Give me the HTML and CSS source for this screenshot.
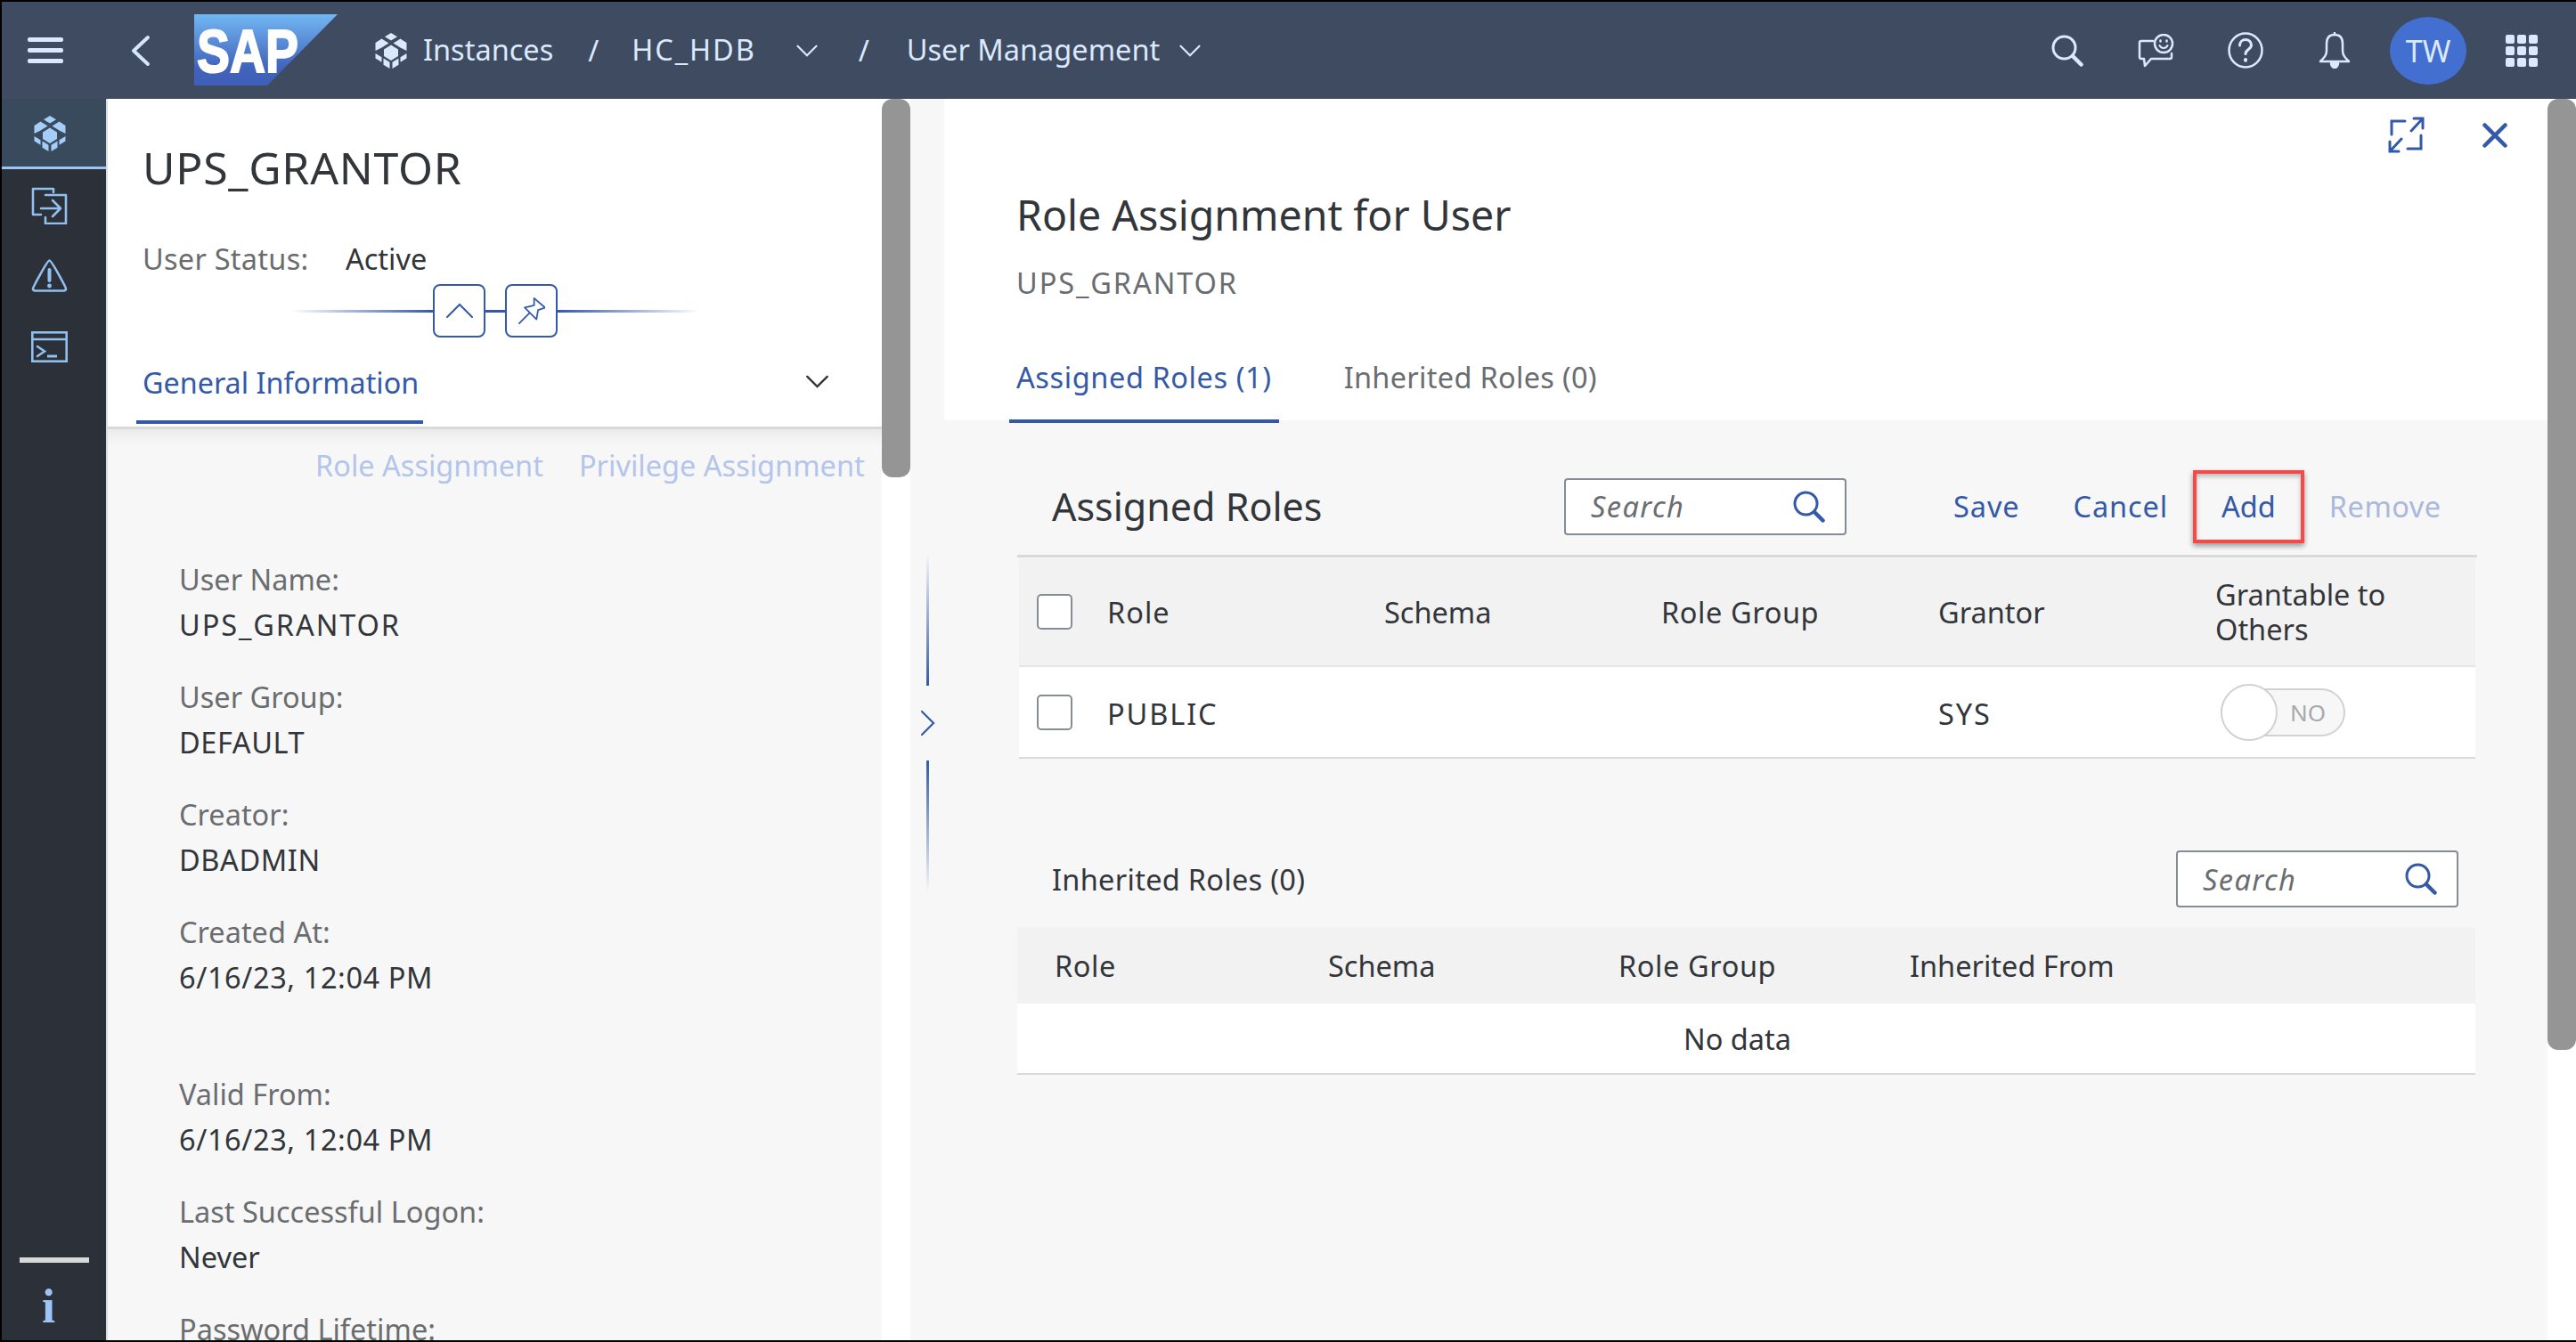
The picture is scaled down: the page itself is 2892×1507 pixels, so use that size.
FILE: index.html
```html
<!DOCTYPE html>
<html lang="en">
<head>
<meta charset="utf-8">
<title>User Management</title>
<link rel="stylesheet" href="styles.css">
</head>
<body>
<svg class="defs" width="0" height="0" aria-hidden="true">
  <defs>
    <linearGradient id="sapfill" x1="0" y1="0" x2="0" y2="1"><stop offset="0" stop-color="#72b7f3"/><stop offset="0.75" stop-color="#4163bc"/><stop offset="1" stop-color="#3f5fb8"/></linearGradient>
    <symbol id="cube" viewBox="0 0 36 40">
      <path d="M18 0l7 4.200-7 4.300-7-4.300z"/>
      <path d="M7.500 6.500L15.500 11.500 7.500 16.500 0.500 20V11z"/>
      <path d="M28.500 6.500L20.500 11.500 28.500 16.500 35.500 20V11z"/>
      <path d="M18 13.500l8 5v7.500l-8 5-8-5v-7.500z"/>
      <path d="M0.500 23l7 4.200v5.500L0.500 28.500z"/>
      <path d="M35.500 23l-7 4.200v5.500l7-4.200z"/>
      <path d="M9.500 28.500l7 4.300V40l-7-4.300z"/>
      <path d="M26.500 28.500l-7 4.300V40l7-4.300z"/>
    </symbol>
    <symbol id="glass" viewBox="0 0 36 36">
      <circle cx="14.500" cy="14.500" r="12.500" fill="none" stroke="currentColor" stroke-width="3"/>
      <path d="M24 24l9.500 9.500" fill="none" stroke="currentColor" stroke-width="4.500" stroke-linecap="round"/>
    </symbol>
    <symbol id="chev-down" viewBox="0 0 28 16">
      <path d="M2 2l12 12L26 2" fill="none" stroke="currentColor" stroke-width="2.500" stroke-linecap="round"/>
    </symbol>
  </defs>
</svg>

<div class="app">
  <header class="shell">
    <button class="shell-btn burger" type="button" aria-label="Menu"><span></span><span></span><span></span></button>
    <svg class="back" viewBox="0 0 22 36"><path d="M19 3L3 18l16 15" fill="none" stroke="currentColor" stroke-width="4" stroke-linecap="round" stroke-linejoin="round"/></svg>
    <svg class="logo" viewBox="0 0 161 80">
      <polygon points="0,0 161,0 82,80 0,80" fill="url(#sapfill)"/>
      <text class="logo-text" x="3" y="65" textLength="114" lengthAdjust="spacingAndGlyphs">SAP</text>
    </svg>
    <nav class="crumbs">
      <svg class="crumb-ico"><use href="#cube"/></svg>
      <span class="crumb c-inst">Instances</span>
      <span class="slash s1">/</span>
      <span class="crumb c-hc ls-caps">HC_HDB</span>
      <svg class="crumb-chev c1"><use href="#chev-down"/></svg>
      <span class="slash s2">/</span>
      <span class="crumb c-um">User Management</span>
      <svg class="crumb-chev c2"><use href="#chev-down"/></svg>
    </nav>
    <div class="shell-actions">
      <svg class="act a-search"><use href="#glass"/></svg>
      <svg class="act a-chat" viewBox="0 0 41 38" fill="none" stroke="currentColor" stroke-width="2.500" stroke-linecap="round" stroke-linejoin="round">
        <path d="M17 8H4a2 2 0 0 0-2 2v16a2 2 0 0 0 2 2h3l1 8 7-8h21a2 2 0 0 0 2-2v-4"/>
        <circle cx="29" cy="11" r="10"/>
        <path d="M24.500 13c2 4 7 4 9 0" stroke-width="2"/>
        <path d="M25.500 7.500v1M32.500 7.500v1" stroke-width="2.500"/>
      </svg>
      <svg class="act a-help" viewBox="0 0 40 41" fill="none" stroke="currentColor" stroke-width="2.500" stroke-linecap="round">
        <ellipse cx="20" cy="20.500" rx="18.500" ry="19"/>
        <path d="M13.500 15c0-4 3-6.500 6.500-6.500s6.500 2.500 6.500 6c0 5-6.500 5-6.500 10" stroke-width="3"/>
        <path d="M20 31v.8" stroke-width="4"/>
      </svg>
      <svg class="act a-bell" viewBox="0 0 36 41" fill="none" stroke="currentColor" stroke-width="2.500" stroke-linejoin="round">
        <path d="M18 3c-6 0-9 4-9 10v8c0 5-3 8-7 12h32c-4-4-7-7-7-12v-8c0-6-3-10-9-10z"/>
        <path d="M18 1v2" stroke-linecap="round"/>
        <path d="M14 35a4 5 0 0 0 8 0z" fill="currentColor"/>
      </svg>
      <div class="avatar">TW</div>
      <div class="apps"><i></i><i></i><i></i><i></i><i></i><i></i><i></i><i></i><i></i></div>
    </div>
  </header>

  <div class="body">
    <nav class="rail">
      <div class="rail-item active"><svg class="rail-cube"><use href="#cube"/></svg></div>
      <div class="rail-list">
        <svg class="rail-ico r-move" viewBox="0 0 41 42" fill="none" stroke="currentColor" stroke-width="2.600" stroke-linejoin="round" stroke-linecap="round">
          <path d="M25 6V2H2v29h9"/>
          <path d="M16 9h23v32H16v-7"/>
          <path d="M11 24h21M24 15l9 9-9 9" />
        </svg>
        <svg class="rail-ico r-warn" viewBox="0 0 41 38" fill="none" stroke="currentColor" stroke-width="2.600" stroke-linejoin="round">
          <path d="M20.500 2.500C18 2.500 2 33 2 34c0 1.500 1 2.500 2.500 2.500h32c1.500 0 2.500-1 2.500-2.500 0-1-16-31.500-18.500-31.500z"/>
          <path d="M20.500 13v12" stroke-width="4" stroke-linecap="round"/>
          <circle cx="20.500" cy="31" r="2.400" fill="currentColor" stroke="none"/>
        </svg>
        <svg class="rail-ico r-term" viewBox="0 0 41 35" fill="none" stroke="currentColor" stroke-width="2.600">
          <rect x="1.300" y="1.300" width="38.400" height="32.400"/>
          <path d="M1.300 9h38.400"/>
          <path d="M7 17l8 5.500L7 28" stroke-linecap="round"/>
          <path d="M18 28h11" stroke-width="3"/>
        </svg>
      </div>
      <div class="rail-foot">
        <span class="rail-rule"></span>
        <span class="rail-i">i</span>
      </div>
    </nav>

    <section class="detail">
      <div class="detail-head">
        <h1 class="detail-title">UPS_GRANTOR</h1>
        <div class="status"><span class="status-label">User Status:</span><span class="status-val">Active</span></div>
        <div class="collapse">
          <span class="rule rule-l"></span>
          <button class="mini" type="button" aria-label="Collapse"><svg viewBox="0 0 30 16"><path d="M1 15L15 1l14 14" fill="none" stroke="currentColor" stroke-width="2"  stroke-linecap="round"/></svg></button>
          <span class="rule rule-m"></span>
          <button class="mini" type="button" aria-label="Pin"><svg viewBox="0 0 34 34" fill="none" stroke="currentColor" stroke-width="2" stroke-linejoin="round" stroke-linecap="round"><path d="M1 33l13-13"/><path d="M20 1l14 12-9 3-2 12-15-15 12-3z"/></svg></button>
          <span class="rule rule-r"></span>
        </div>
        <div class="tabs-row">
          <span class="tab-gi">General Information</span>
          <svg class="gi-chev"><use href="#chev-down"/></svg>
        </div>
      </div>
      <div class="detail-body">
        <div class="links"><span>Role Assignment</span><span>Privilege Assignment</span></div>
        <dl class="facts">
          <dt>User Name:</dt><dd class="ls-caps">UPS_GRANTOR</dd>
          <dt>User Group:</dt><dd class="ls-s">DEFAULT</dd>
          <dt>Creator:</dt><dd class="ls-s">DBADMIN</dd>
          <dt>Created At:</dt><dd class="gap-after ls-s">6/16/23, 12:04 PM</dd>
          <dt>Valid From:</dt><dd class="ls-s">6/16/23, 12:04 PM</dd>
          <dt>Last Successful Logon:</dt><dd>Never</dd>
          <dt>Password Lifetime:</dt>
        </dl>
      </div>
    </section>
    <div class="track track-l"><div class="thumb thumb-l"></div></div>

    <div class="splitter">
      <span class="split-line up"></span>
      <svg class="split-chev" viewBox="0 0 17 30"><path d="M2 2l13 13L2 28" fill="none" stroke="currentColor" stroke-width="2.200" stroke-linecap="round"/></svg>
      <span class="split-line down"></span>
    </div>

    <section class="panel">
      <div class="panel-head">
        <div class="panel-tools">
          <svg class="tool-expand" viewBox="0 0 41 41" fill="none" stroke="currentColor" stroke-width="3" stroke-linecap="round"><path d="M19 5H4v15"/><path d="M22 36h15V21"/><path d="M26 16L39 2M29 2h10v11"/><path d="M15 25L2 39M12 39H2V28"/></svg>
          <svg class="tool-close" viewBox="0 0 28 28" fill="none" stroke="currentColor" stroke-width="4.500" stroke-linecap="round"><path d="M2.500 2.500l23 23M25.500 2.500l-23 23"/></svg>
        </div>
        <h2 class="panel-title">Role Assignment for User</h2>
        <div class="panel-sub ls-caps">UPS_GRANTOR</div>
        <div class="panel-tabs">
          <span class="ptab on ls-s">Assigned Roles (1)</span>
          <span class="ptab ls-t">Inherited Roles (0)</span>
        </div>
      </div>

      <div class="panel-body">
        <div class="toolbar">
          <h3 class="tb-title">Assigned Roles</h3>
          <div class="search tb-search"><span>Search</span><svg><use href="#glass"/></svg></div>
          <div class="tb-actions">
            <a class="act-link l-save">Save</a>
            <a class="act-link l-cancel">Cancel</a>
            <a class="act-link l-add">Add</a>
            <a class="act-link l-remove">Remove</a>
          </div>
        </div>

        <div class="grid assigned">
          <div class="g-head">
            <span class="check"></span>
            <span class="gc ls-1">Role</span>
            <span class="gc">Schema</span>
            <span class="gc ls-s">Role Group</span>
            <span class="gc">Grantor</span>
            <span class="gc grantable">Grantable to Others</span>
          </div>
          <div class="g-row">
            <span class="check"></span>
            <span class="gc txt ls-caps">PUBLIC</span>
            <span class="gc"></span>
            <span class="gc"></span>
            <span class="gc txt ls-caps">SYS</span>
            <span class="gc"><span class="switch"><span class="knob"></span><span class="sw-text">NO</span></span></span>
          </div>
        </div>

        <div class="sub-bar">
          <span class="sub-title ls-t">Inherited Roles (0)</span>
          <div class="search"><span>Search</span><svg><use href="#glass"/></svg></div>
        </div>

        <div class="grid inherited">
          <div class="i-head">
            <span class="ls-s">Role</span><span>Schema</span><span class="ls-s">Role Group</span><span>Inherited From</span>
          </div>
          <div class="i-row">No data</div>
        </div>
      </div>
    </section>
    <div class="track track-r"><div class="thumb thumb-r"></div></div>
  </div>
</div>
</body>
</html>
```
FILE: styles.css
```css
* { box-sizing: border-box; }
html, body { margin: 0; padding: 0; height: 100%; overflow: hidden; background: #000; }
body { font-family: "Noto Sans", "Liberation Sans", sans-serif; font-size: 32.5px; color: #32363a; }
.defs { position: absolute; }
h1, h2, h3, dl, dd { margin: 0; font-weight: 400; }
button { padding: 0; background: none; border: 0; font: inherit; color: inherit; }
.ls-caps { letter-spacing: 1.9px; }
.ls-s { letter-spacing: .6px; }
.ls-t { letter-spacing: .3px; }
.ls-1 { letter-spacing: 1px; }

.app { display: flex; flex-direction: column; width: 2892px; height: 1507px; padding: 2px 0 2px 2px; overflow: hidden; }

/* shell */
.shell { flex: 0 0 109px; display: flex; align-items: center; background: #3f4b60; color: #dbe9fd; line-height: 44px; }
.burger { width: 40px; height: 29px; margin-left: 29px; display: flex; flex-direction: column; justify-content: space-between; }
.burger span { display: block; height: 5px; border-radius: 2px; background: #dbe9fd; }
.back { width: 22px; height: 36px; margin-left: 76px; color: #d5e6fb; }
.logo { width: 161px; height: 80px; margin-left: 49px; margin-top: -2px; }
.logo-text { font-family: "Liberation Sans", sans-serif; font-weight: 700; font-size: 69px; fill: #fff; stroke: #fff; stroke-width: 2px; }
.crumbs { display: flex; align-items: center; margin-left: 42px; }
.crumb-ico { width: 36px; height: 40px; fill: #dbe9fd; }
.crumb { white-space: nowrap; position: relative; top: -1px; }
.c-inst { margin-left: 18px; }
.s1 { margin-left: 39px; }
.c-hc { margin-left: 37px; }
.crumb-chev { width: 26px; height: 14px; }
.c1 { margin-left: 44px; }
.s2 { margin-left: 45px; }
.c-um { margin-left: 42px; }
.c2 { margin-left: 21px; }
.shell-actions { margin-left: auto; display: flex; align-items: center; padding-right: 43px; }
.act { display: block; }
.a-search { width: 36px; height: 36px; margin-right: 61px; }
.a-chat { width: 41px; height: 38px; margin-right: 60px; }
.a-help { width: 40px; height: 41px; margin-right: 62px; }
.a-bell { width: 36px; height: 41px; margin-right: 44px; }
.avatar { width: 86px; height: 76px; border-radius: 50%; background: #436fd0; display: flex; align-items: center; justify-content: center; margin-right: 44px; color: #dbe9fd; font-size: 34px; }
.apps { display: grid; grid-template-columns: repeat(3, 10px); grid-auto-rows: 10px; gap: 3px; }
.apps i { border-radius: 2px; background: #dbe9fd; }

/* body */
.body { flex: 1; min-height: 0; display: flex; background: #f7f7f7; }
.rail { flex: 0 0 117px; display: flex; flex-direction: column; background: #2c3039; color: #91bfee; }
.rail-item.active { height: 79px; display: flex; justify-content: center; padding: 19px 10px 0 0; background: #3a4a5d; border-bottom: 3px solid #9cc4f5; }
.rail-cube { width: 36px; height: 40px; fill: #a5cdfa; }
.rail-list { display: flex; flex-direction: column; align-items: center; gap: 38px; padding: 20px 10px 0 0; }
.rail-ico { display: block; width: 41px; flex: none; }
.r-move { height: 42px; }
.r-warn { height: 38px; }
.r-term { height: 35px; margin-top: 6px; }
.rail-foot { margin-top: auto; display: flex; flex-direction: column; align-items: center; }
.rail-rule { width: 78px; height: 6px; margin-bottom: 11px; background: #d9d9d9; }
.rail-i { font-family: "Liberation Serif", serif; font-size: 54px; line-height: 76px; color: #9cc4f5; font-weight: 700; margin-left: -12px; }

/* left */
.detail { flex: 0 0 871px; display: flex; flex-direction: column; overflow: hidden; border-left: 2px solid #dcdcdc; }
.detail-head { height: 371px; background: #fff; border-bottom: 3px solid #d9d9d9; padding-left: 39px; position: relative; }
.detail-title { font-size: 50px; letter-spacing: .7px; line-height: 60px; padding-top: 47px; height: 107px; }
.status { margin-top: 51px; line-height: 44px; height: 44px; display: flex; }
.status-label { width: 228px; color: #6a6d70; letter-spacing: .25px; }
.status-val { color: #32363a; }
.collapse { display: flex; align-items: center; height: 60px; margin-top: 6px; margin-left: -39px; padding-left: 205px; color: #3359a8; }
.rule { display: block; height: 3px; }
.rule-l { width: 160px; background: linear-gradient(90deg, rgba(51,89,168,0), #3359a8); }
.rule-m { width: 22px; background: #3359a8; }
.rule-r { width: 160px; background: linear-gradient(90deg, #3359a8, rgba(51,89,168,0)); }
.mini { width: 59px; height: 60px; border: 2px solid #3359a8; border-radius: 8px; display: flex; align-items: center; justify-content: center; background: #fff; }
.mini svg { width: 30px; height: 30px; }
.tabs-row { margin-left: -7px; width: 322px; height: 97px; padding: 28px 0 0 7px; line-height: 44px; color: #3359a8; border-bottom: 4px solid #3359a8; white-space: nowrap; position: relative; }
.tab-gi { font-size: 32.3px; }
.gi-chev { position: absolute; left: 751px; top: 42px; width: 27px; height: 15px; color: #32363a; }
.detail-body { flex: 1; background: linear-gradient(#ebebeb, #f7f7f7 18px); overflow: hidden; padding-left: 80px; }
.links { display: flex; gap: 40px; padding-left: 153px; line-height: 44px; padding-top: 19px; color: #b3c5ea; white-space: nowrap; }
.facts { padding-top: 80px; }
.facts dt { color: #6a6d70; line-height: 51px; }
.facts dd { line-height: 51px; margin-bottom: 30px; }
.facts dd.gap-after { margin-bottom: 80px; }

/* scroll */
.track { flex: 0 0 32px; background: #fff; }
.thumb { width: 100%; background: #959595; }
.thumb-l { height: 425px; border-radius: 12px; }
.thumb-r { height: 1068px; border-radius: 12px; }

/* splitter */
.splitter { flex: 0 0 38px; display: flex; flex-direction: column; align-items: center; padding-top: 511px; color: #3359a8; }
.split-line { width: 3px; height: 148px; }
.split-line.up { background: linear-gradient(rgba(51,89,168,0), #3359a8); }
.split-line.down { background: linear-gradient(#3359a8, rgba(51,89,168,0)); }
.split-chev { width: 17px; height: 30px; margin: 27px 0; }

/* right */
.panel { flex: 1; min-width: 0; display: flex; flex-direction: column; }
.panel-head { height: 361px; background: #fff; padding-left: 81px; position: relative; }
.panel-tools { position: absolute; right: 45px; top: 20px; display: flex; align-items: center; gap: 65px; color: #3359a8; }
.tool-expand { width: 41px; height: 41px; }
.tool-close { width: 28px; height: 28px; }
.panel-title { font-size: 46.5px; line-height: 60px; padding-top: 100px; height: 160px; }
.panel-sub { color: #6a6d70; line-height: 44px; margin-top: 25px; }
.panel-tabs { display: flex; gap: 65px; margin-top: 62px; margin-left: -8px; }
.ptab { padding: 0 8px; line-height: 44px; height: 73px; color: #6a6d70; white-space: nowrap; }
.ptab.on { color: #3359a8; border-bottom: 4px solid #3359a8; }

.panel-body { flex: 1; padding: 0 79px 0 82px; }
.toolbar { display: flex; align-items: center; height: 151px; padding: 42px 0 0 39px; }
.tb-title { font-size: 43px; line-height: 56px; width: 575px; }
.search { display: flex; align-items: center; justify-content: space-between; width: 317px; height: 64px; background: #fff; border: 2px solid #868b98; border-radius: 4px; padding: 0 22px 0 28px; font-style: italic; color: #6a6d70; letter-spacing: 1.4px; }
.search svg { width: 36px; height: 36px; color: #3359a8; }
.tb-actions { display: flex; align-items: center; margin-left: 120px; color: #3359a8; }
.act-link { line-height: 44px; white-space: nowrap; letter-spacing: .9px; }
.l-cancel { margin-left: 60px; }
.l-add { margin-left: 28px; letter-spacing: 0; padding: 15px 28px; border: 4px solid #f44a4a; box-shadow: 0 3px 6px rgba(0,0,0,.4), inset 0 3px 5px rgba(0,0,0,.25); }
.l-remove { margin-left: 28px; color: #a9b8dc; letter-spacing: .5px; }

.grid.assigned { border-top: 3px solid #d9d9d9; padding-top: 1px; }
.g-head, .g-row { display: grid; grid-template-columns: 99px repeat(5, 311px); align-items: center; margin: 0 2px 0 2px; }
.g-head { height: 122px; background: #f2f2f2; border-bottom: 2px solid #e5e5e5; line-height: 39px; }
.g-row { height: 103px; background: #fff; border-bottom: 2px solid #d9d9d9; }
.g-row .txt { padding-top: 3px; }
.check { width: 40px; height: 40px; margin-left: 20px; background: #fff; border: 2px solid #868b98; border-radius: 5px; }
.grantable { width: 230px; }
.switch { position: relative; display: inline-flex; align-items: center; justify-content: flex-end; width: 140px; height: 54px; margin-left: 6px; background: #f7f7f7; border: 2px solid #d0d2d6; border-radius: 27px; vertical-align: middle; }
.knob { position: absolute; left: -2px; top: -7px; width: 64px; height: 64px; border-radius: 50%; background: #fff; border: 2px solid #d0d2d6; }
.sw-text { font-size: 26px; color: #a7a9ab; padding-right: 20px; }

.sub-bar { display: flex; align-items: center; justify-content: space-between; padding: 0 21px 0 39px; height: 64px; margin-top: 103px; margin-bottom: 22px; }
.grid.inherited { margin-right: 2px; }
.i-head, .i-row { background: #fff; }
.i-head { display: grid; grid-template-columns: 307px 326px 327px 1fr; padding-left: 42px; height: 86px; align-items: center; background: #f2f2f2; }
.i-row { height: 80px; display: flex; align-items: center; justify-content: center; padding-right: 20px; border-bottom: 2px solid #d9d9d9; }
```
